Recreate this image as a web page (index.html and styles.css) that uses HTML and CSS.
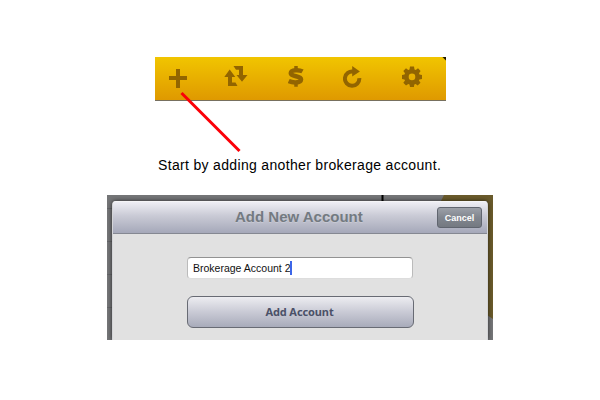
FILE: index.html
```
<!DOCTYPE html>
<html lang="en">
<head>
<meta charset="utf-8">
<title>Add New Account</title>
<link rel="stylesheet" href="styles.css">
</head>
<body>
<main class="guide">
  <div class="toolbar">
    <svg class="icon" width="18" height="22" viewBox="0 0 18 22"><path d="M7 3h4v7h7v4h-7v8H7v-8H0v-4h7z"/></svg>
    <svg class="icon" width="24" height="22" viewBox="0 0 24 22"><path d="M5.700 3.500 11.300 11H8v5.500h3.500l2 3.500H4V11H.3zM9.500 0H19v9h4.500L18 15.700 12.500 9H15V3.800h-3z"/></svg>
    <svg class="icon dollar" width="16" height="22" viewBox="0 0 16 22"><path d="M14.500 5.400C11.500 3.700 3 3.300 2.800 7c-.3 4 10.700 2.500 10.200 6.500-.3 4-9 3.200-12.300 1.600"/><path class="stem" d="M8 0V4M8 17v3.700"/></svg>
    <svg class="icon" width="19" height="22" viewBox="0 0 19 22"><path class="arc" d="M10.500 5.600A7.200 7.200 0 1 0 16.300 12.200"/><path d="M9.200 0 16.900 5.400 9.200 10.400z"/></svg>
    <svg class="icon" width="20" height="22" viewBox="0 0 20 22"><path fill-rule="evenodd" d="M8 .5h4l.5 3 1.200.5L16 2.200 18.600 5l-1.600 2.200.5 1.300 2.500.4v4l-2.600.5-.5 1.200 1.600 2.200-2.800 2.800-2.100-1.600-1.300.6-.4 2.400H8l-.5-2.500-1.200-.5L4 19.600l-2.700-2.800L3 14.600l-.6-1.200L0 13V9l2.500-.5.5-1.300L1.300 5 4 2.200 6.300 4l1.200-.5zM10 7.600a3.300 3.300 0 1 0 0 6.600 3.300 3.300 0 0 0 0-6.600z"/></svg>
  </div>
  <p class="caption">Start by adding another brokerage account.</p>
  <section class="screen">
    <svg class="backdrop" width="386" height="145" viewBox="0 0 386 145">
      <path class="rule" d="M0 13.500h6M0 46.500h6M0 79.500h6M0 112.500h6"/>
      <path class="divider" d="M275.500 0v6"/>
      <path class="disc" d="M334 6q2-4 3-6h49v124l-6-4V6z"/>
    </svg>
    <div class="dialog">
      <header class="titlebar">
        <h1 class="title">Add New Account</h1>
        <button class="cancel">Cancel</button>
      </header>
      <div class="form">
        <div class="field">Brokerage Account 2<span class="caret"></span></div>
        <button class="submit">Add Account</button>
      </div>
    </div>
  </section>
  <svg class="pointer" width="64" height="64" viewBox="0 0 64 64"><path d="M2.500 3 60.500 61"/></svg>
</main>
</body>
</html>
```
FILE: styles.css
```
* { box-sizing: border-box; }
body {
  margin: 0;
  background: #fff;
  font-family: "Liberation Sans", Arial, sans-serif;
}
.guide {
  position: relative;
  width: 600px;
  height: 400px;
  padding-top: 57px;
  overflow: hidden;
}
.toolbar {
  display: grid;
  grid-template-columns: 55px 63.500px 55px 59px 20px;
  width: 291px;
  height: 44px;
  margin-left: 155px;
  padding: 9px 0 0 14px;
  background:
    linear-gradient(225deg, #1b1600 2px, transparent 3px),
    linear-gradient(#f1c500, #df9900);
  border-bottom: 1px solid #77705f;
}
.icon { display: block; fill: #926500; }
.dollar path { fill: none; stroke: #926500; stroke-width: 4.500; }
.dollar .stem { stroke-width: 3.500; }
.icon .arc { fill: none; stroke: #926500; stroke-width: 4; }
.pointer {
  position: absolute;
  left: 179px;
  top: 90px;
  fill: none;
  stroke: #fb0007;
  stroke-width: 3;
}
.caption {
  height: 20px;
  margin: 54px 0 0 158px;
  color: #000;
  font-size: 14px;
  letter-spacing: .33px;
  line-height: 20px;
  white-space: nowrap;
}
.screen {
  position: relative;
  width: 386px;
  height: 145px;
  margin: 20px 0 0 107px;
  padding: 6px 5px 0;
  background: #747577;
  overflow: hidden;
}
.backdrop { position: absolute; left: 0; top: 0; }
.rule { stroke: #646568; }
.divider { stroke: #000; stroke-width: 2; }
.disc { fill: #695a2b; }
.dialog {
  position: relative;
  height: 139px;
  background: #e1e1e1;
  border: solid #d4d5d8;
  border-width: 0 1px;
  border-radius: 4px 4px 0 0;
  box-shadow: 0 0 4px rgba(0, 0, 0, .65);
}
.titlebar {
  display: grid;
  grid-template-columns: 1fr auto;
  height: 33px;
  padding: 6px 5px 0 122px;
  background: linear-gradient(#eeeef4, #c9cad5 45%, #a5a8b9);
  border-top: 1px solid #f5f5f7;
  border-bottom: 1px solid #858892;
  border-radius: 3px 3px 0 0;
}
.title {
  margin: 0;
  color: #737a81;
  font-size: 15px;
  letter-spacing: 0;
  line-height: 18px;
  text-shadow: 0 1px rgba(255, 255, 255, .2);
  white-space: nowrap;
}
.cancel {
  width: 45px;
  height: 21px;
  padding: 0;
  margin-top: -1px;
  color: #fff;
  background: linear-gradient(#9ca0a8, #81868f 50%, #747981);
  border: 1px solid #60656f;
  border-radius: 3px;
  font: bold 9px/18px "Liberation Sans", Arial, sans-serif;
}
.form { padding: 23px 0 0 74px; }
.field {
  display: flex;
  align-items: center;
  width: 226px;
  height: 22px;
  padding-left: 5px;
  color: #111;
  background: #fff;
  border: 1px solid #bbb;
  border-top: 1px solid #929292;
  border-bottom-color: #ddd;
  border-radius: 4px;
  font-size: 10.500px;
  white-space: nowrap;
}
.caret { width: 2px; height: 14px; background: #3d66e8; }
.submit {
  display: block;
  width: 227px;
  height: 32px;
  margin-top: 17px;
  padding: 0 2px 1px 0;
  color: #4b5168;
  background: linear-gradient(#ededf1, #c9cad5 50%, #a8abba);
  border: 1px solid #686b74;
  border-radius: 6px;
  font: bold 11px/29px "Noto Sans", "Open Sans", sans-serif;
  letter-spacing: -.1px;
}
```
